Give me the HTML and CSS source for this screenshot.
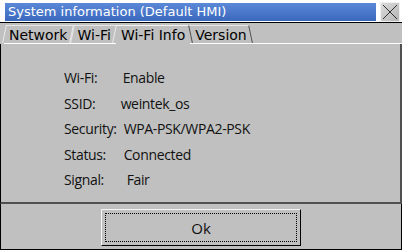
FILE: index.html
```html
<!DOCTYPE html>
<html lang="en">
<head>
  <meta charset="UTF-8">
  <title>System information</title>
  <link rel="stylesheet" href="styles.css">
</head>
<body>
  <div class="window">
    <div class="titlerow">
      <div class="titlebar">System information (Default HMI)</div>
      <div class="close">
        <svg width="18" height="18" viewBox="0 0 18 18">
          <path d="M2 2 L16 16 M16 2 L2 16" stroke="#303030" stroke-width="1" fill="none"/>
        </svg>
      </div>
    </div>

    <div class="tabs">
      <div class="tab left">Network</div>
      <div class="tab left">Wi-Fi</div>
      <div class="tab active">Wi-Fi Info</div>
      <div class="tab right">Version</div>
      <div class="tab-fill"></div>
    </div>

    <div class="panel">
      <div class="info">
        <span>Wi-Fi:</span><span class="v1">Enable</span>
        <span>SSID:</span><span class="v2">weintek_os</span>
        <span>Security:</span><span>WPA-PSK/WPA2-PSK</span>
        <span>Status:</span><span>Connected</span>
        <span>Signal:</span><span class="v4">Fair</span>
      </div>
    </div>

    <div class="footer">
      <button class="ok">Ok</button>
    </div>
  </div>
</body>
</html>
```

FILE: styles.css
```css
body {
  margin: 0;
  padding: 0;
  background-color: #c0c0c0;
  font-family: "DejaVu Sans", sans-serif;
}
.window {
  width: 402px;
  height: 250px;
  display: flex;
  flex-direction: column;
  box-sizing: border-box;
  border-bottom: 1px solid #000;
}
.titlerow {
  height: 22px;
  background: #fff;
  display: flex;
  align-items: flex-start;
  border-bottom: 1px solid #000;
}
.titlebar {
  margin: 3px 0 0 5px;
  width: 371px;
  height: 18px;
  box-sizing: border-box;
  padding-left: 3px;
  background: linear-gradient(#5c88d8, #3a68bc);
  color: #fff;
  font-size: 13px;
  line-height: 18px;
  white-space: nowrap;
}
.close {
  margin: 2px 0 0 4px;
  width: 20px;
  height: 20px;
  box-sizing: border-box;
  border: 1px solid #f0f0f0;
  background: linear-gradient(135deg, #dcdcdc, #b4b4b4);
  display: flex;
  align-items: center;
  justify-content: center;
}
.tabs {
  height: 21px;
  display: flex;
  padding-left: 4px;
}
.tab {
  position: relative;
  padding: 3px 5px 0 5px;
  font-size: 14px;
  line-height: 18px;
  color: #000;
  border-bottom: 1px solid #fff;
  white-space: nowrap;
}
.tab::before {
  content: "";
  position: absolute;
  top: 2px;
  bottom: 0;
  left: 0;
  right: 0;
  border-top: 1px solid #e8e8e8;
  border-left: 1px solid #e8e8e8;
  border-right: 1px solid #e8e8e8;
}
.tab.left::before {
  transform: skewX(-12deg);
}
.tab.right::before {
  transform: skewX(12deg);
  border-right-color: #505050;
  border-left-color: #505050;
}
.tab.active {
  border-bottom-color: transparent;
}
.tab.active::before {
  border-left: none;
  border-right: none;
  border-top-color: #f4f4f4;
}
.tab-fill {
  flex: 1;
  border-bottom: 1px solid #fff;
}
.panel {
  flex: 1;
  border-left: 1px solid #000;
  border-right: 2px solid #505050;
  border-bottom: 2px solid #505050;
  padding: 24px 0 0 63px;
}
.info {
  display: grid;
  grid-template-columns: auto 1fr;
  column-gap: 7px;
  row-gap: 6px;
  font-family: "Open Sans", "Noto Sans", sans-serif;
  font-size: 14px;
  letter-spacing: -0.35px;
  line-height: 19.5px;
  color: #111;
}
.v1 { margin-left: -1px; }
.v2 { margin-left: -3px; }
.v4 { margin-left: 3px; }
.footer {
  height: 45px;
  display: flex;
  justify-content: center;
  align-items: flex-start;
  border-left: 1px solid #000;
  border-right: 1px solid #000;
}
.ok {
  margin-top: 5px;
  width: 200px;
  height: 37px;
  background: #c0c0c0;
  border: 1px solid;
  border-color: #f4f4f4 #000 #000 #f4f4f4;
  outline: 1px dotted #000;
  outline-offset: -5px;
  font-family: "Open Sans", "Noto Sans", sans-serif;
  font-size: 15px;
  color: #111;
  padding: 0;
}
```
